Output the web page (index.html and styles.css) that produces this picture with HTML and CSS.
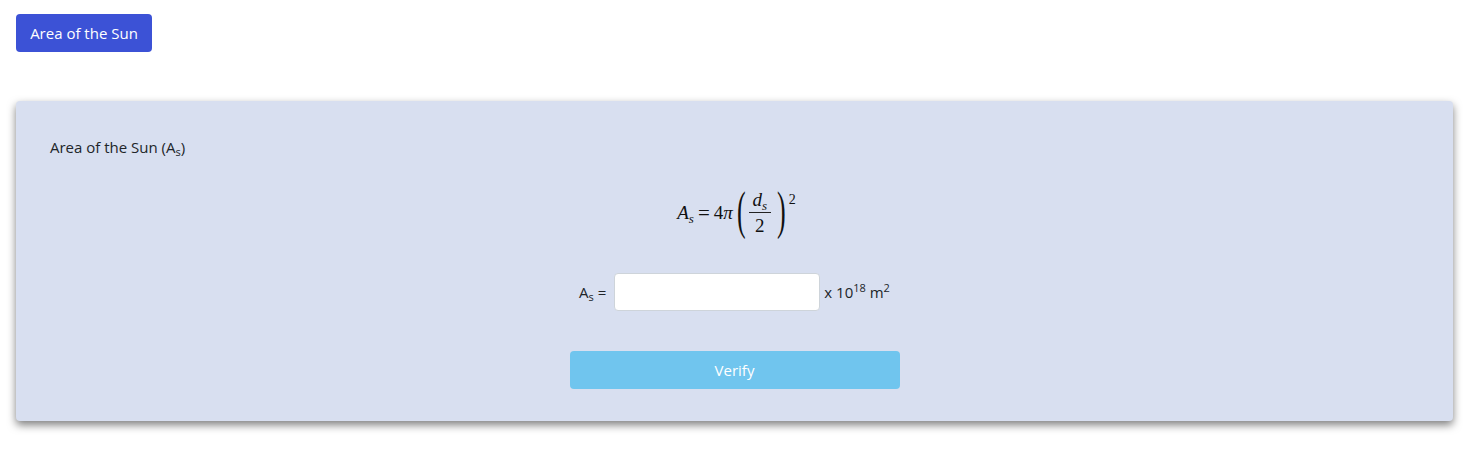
FILE: index.html
```html
<!DOCTYPE html>
<html>
<head>
<meta charset="utf-8">
<link rel="stylesheet" href="styles.css">
</head>
<body>
<div class="page">
  <button class="topbtn">Area of the Sun</button>
  <div class="card">
    <div class="title">Area of the Sun (A<sub>s</sub>)</div>
    <div class="formula">
      <span class="math">
        <span class="mi">A<sub class="msub">s</sub></span>
        <span class="mo">=</span>
        <span class="mn">4</span><span class="mi pi">π</span>
        <span class="paren">(</span>
        <span class="frac">
          <span class="num"><span class="mi">d<sub class="msub">s</sub></span></span>
          <span class="bar"></span>
          <span class="den">2</span>
        </span>
        <span class="paren">)</span>
        <span class="sup">2</span>
      </span>
    </div>
    <div class="row">
      <label class="lbl">A<sub>s</sub> =</label>
      <input class="field" type="text">
      <span class="unit">x 10<sup>18</sup> m<sup>2</sup></span>
    </div>
    <div class="actions">
      <button class="verify">Verify</button>
    </div>
  </div>
</div>
</body>
</html>
```

FILE: styles.css
```css
html, body {
  margin: 0;
  padding: 0;
  background: #ffffff;
}
body {
  font-family: "Open Sans", "Noto Sans", sans-serif;
  font-size: 15px;
  color: #212529;
}
.page {
  padding: 14px 16px 30px 16px;
}
.topbtn {
  display: block;
  height: 38px;
  width: 136px;
  padding: 0;
  border: none;
  border-radius: 4px;
  background: #3c52d6;
  color: #ffffff;
  font-family: "Open Sans", sans-serif;
  font-size: 15px;
  cursor: pointer;
}
.card {
  margin-top: 49px;
  width: 1437px;
  height: 320px;
  box-sizing: border-box;
  background: #d8dff0;
  border-radius: 4px;
  box-shadow: 0 4px 9px rgba(0, 0, 0, 0.5);
  padding: 36px 34px 0 34px;
}
.title {
  font-size: 15px;
  line-height: 20px;
  color: #212529;
}
.title sub, .lbl sub {
  font-size: 11px;
  vertical-align: -3px;
  line-height: 0;
}
.formula {
  margin-top: 26px;
  height: 60px;
  display: flex;
  justify-content: center;
  align-items: center;
}
.math {
  display: inline-flex;
  align-items: center;
  font-family: "Liberation Serif", "Times New Roman", serif;
  font-size: 19px;
  color: #111;
  margin-left: 4px;
}
.mi {
  font-style: italic;
}
.msub {
  font-size: 13px;
  vertical-align: -4px;
  line-height: 0;
}
.mo {
  margin: 0 4px;
  font-size: 21px;
}
.pi {
  margin-right: 1px;
}
.paren {
  font-size: 52px;
  line-height: 56px;
  transform: scaleX(0.5);
  display: inline-block;
  width: 12px;
  text-align: center;
  font-weight: 400;
  margin-top: -4px;
}
.frac {
  display: inline-flex;
  flex-direction: column;
  align-items: center;
  font-size: 19px;
  padding: 0 3px;
}
.frac .num {
  line-height: 20px;
}
.bar {
  width: 22px;
  height: 1px;
  background: #222;
  margin: 2px 0 3px 0;
}
.den {
  line-height: 20px;
}
.sup {
  font-size: 14px;
  align-self: flex-start;
  margin-top: 5px;
  margin-left: 3px;
}
.row {
  margin-top: 30px;
  display: flex;
  justify-content: center;
  align-items: center;
  height: 38px;
  padding-left: 0;
}
.lbl {
  font-size: 15px;
  margin-right: 8px;
}
.field {
  width: 206px;
  height: 38px;
  box-sizing: border-box;
  border: 1px solid #ced4da;
  border-radius: 4px;
  background: #ffffff;
  padding: 0 10px;
  font-size: 15px;
}
.unit {
  margin-left: 4px;
  font-size: 15px;
}
.unit sup {
  font-size: 11px;
  vertical-align: 6px;
  line-height: 0;
}
.actions {
  margin-top: 40px;
  display: flex;
  justify-content: center;
}
.verify {
  width: 330px;
  height: 38px;
  border: none;
  border-radius: 4px;
  background: #70c5ee;
  color: #ffffff;
  font-family: "Open Sans", sans-serif;
  font-size: 15px;
  padding: 0;
}
```
